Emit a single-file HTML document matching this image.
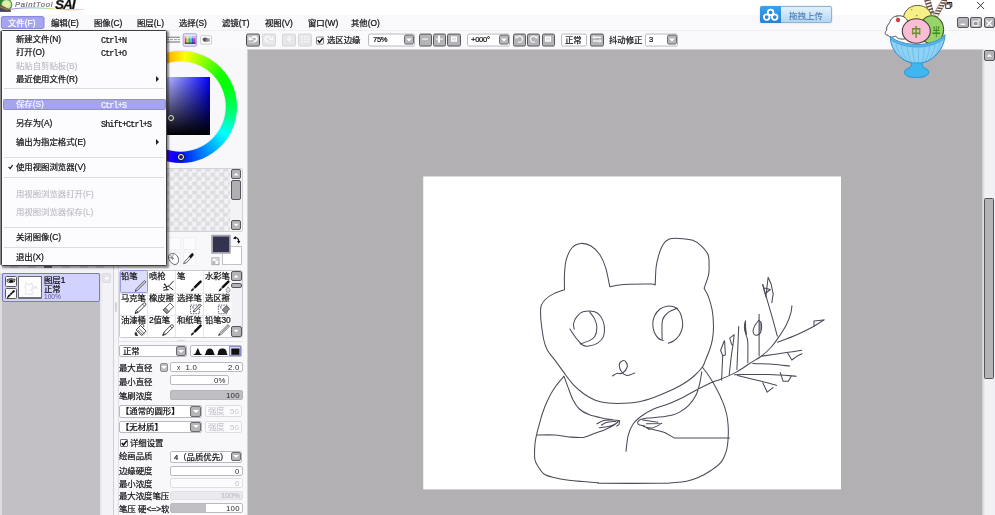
<!DOCTYPE html>
<html lang="zh">
<head>
<meta charset="utf-8">
<title>PaintTool SAI</title>
<style>
html,body{margin:0;padding:0;}
body{width:995px;height:515px;overflow:hidden;position:relative;background:#f8f8fb;
 font-family:"Liberation Sans","Noto Sans CJK SC",sans-serif;font-size:8.4px;color:#222;}
.a{position:absolute;}
.t{will-change:transform;position:absolute;white-space:nowrap;line-height:10px;font-size:8.4px;color:#101014;-webkit-text-stroke:0.22px currentColor;}
.m{font-family:"Liberation Mono","Noto Sans CJK SC",monospace;letter-spacing:-0.84px;}
.dis{color:#b9b9c2;-webkit-text-stroke:0.1px #b9b9c2;}
.n{font-family:"Liberation Sans",sans-serif;letter-spacing:0.25px;-webkit-text-stroke:0 transparent;color:#26262c;}
.box{position:absolute;box-sizing:border-box;border:1px solid #b9b9c1;border-radius:2px;background:#fff;}
.btn{position:absolute;box-sizing:border-box;border:1.6px solid #56565c;border-radius:2px;background:#b4b4b8;}
.btn.off{border-color:#d6d6da;background:#e6e6ea;}
.dd{position:absolute;box-sizing:border-box;border:1.5px solid #6a6a70;border-radius:2px;background:#b6b6ba;}
.dd:after{content:"";position:absolute;left:50%;top:50%;margin:-1.5px 0 0 -3px;border:3px solid transparent;border-top:3.5px solid #fff;border-bottom:none;}
.sep{position:absolute;left:4px;width:160px;height:1px;background:#dcdce2;}
</style>
</head>
<body>
<!-- title strip -->
<div class="a" style="left:0;top:0;width:995px;height:14.8px;background:#fff;"></div>
<!-- menubar strip -->
<div class="a" style="left:0;top:14.8px;width:995px;height:16px;background:#f9f8fb;"></div>
<div class="a" style="left:0;top:31px;width:995px;height:18px;background:#faf9fc;"></div>
<div class="a" style="left:0;top:30.4px;width:995px;height:1px;background:#efeef3;"></div>

<!-- LOGO -->
<svg class="a" style="left:0;top:0" width="90" height="14" viewBox="0 0 90 14">
<defs><linearGradient id="sw" x1="0" x2="1"><stop offset="0" stop-color="#7d4fb0"/><stop offset="0.2" stop-color="#5f7fd8"/><stop offset="0.45" stop-color="#62c48a"/><stop offset="0.62" stop-color="#e6d84a"/><stop offset="0.8" stop-color="#e8863c"/><stop offset="1" stop-color="#e24a5a" stop-opacity="0.3"/></linearGradient></defs>
<path d="M9 9.6 C 25 6.5, 45 8.3, 60 9.3 S 78 9.6, 84 9.2" fill="none" stroke="url(#sw)" stroke-width="1" opacity="0.7"/>
<rect x="0" y="0" width="3" height="9" fill="#2f7f33"/>
<ellipse cx="6.5" cy="4.6" rx="5.3" ry="5.2" fill="#cfe89a" stroke="#4d9a48" stroke-width="1.2"/>
<ellipse cx="6.6" cy="4" rx="3.2" ry="2.9" fill="#e2f0b4"/>
<path d="M0 4.6 L10.6 10 L10.9 11.7 L0 11.7 Z" fill="#3a5e3c"/>
<path d="M0 6 L9.6 10.6" stroke="#b8503c" stroke-width="1.1"/>
<path d="M0 6.8 L8 10.4" stroke="#caa070" stroke-width="0.5"/>
<path d="M0 8.6 L0 11.7 L11 11.7 L10.7 10.6 L6 10.2 Z" fill="#4e3f6e" opacity="0.9"/>
</svg>
<div class="t" style="left:14.5px;top:-0.5px;font-size:7.6px;font-style:italic;letter-spacing:0.75px;color:#707076;font-family:'Liberation Sans',sans-serif;">PaintTool</div>
<div class="t" style="left:54.6px;top:-1.7px;font-size:13.6px;line-height:14px;font-weight:bold;font-style:italic;letter-spacing:-1.1px;color:#111;font-family:'Liberation Sans',sans-serif;">SAI</div>
<!-- MENUBAR -->
<svg class="a" style="left:0;top:14px" width="50" height="17" viewBox="0 14 50 17"><rect x="1.4" y="16.6" width="42.6" height="11.8" rx="1.6" fill="#a5a5f0" stroke="#8484dc" stroke-width="1"/></svg>
<div class="t" style="left:7.6px;top:18.2px;color:#fff">文件(F)</div>
<div class="t" style="left:50.6px;top:18.2px">编辑(E)</div>
<div class="t" style="left:93.5px;top:18.2px">图像(C)</div>
<div class="t" style="left:136.5px;top:18.2px">图层(L)</div>
<div class="t" style="left:179.4px;top:18.2px">选择(S)</div>
<div class="t" style="left:222.4px;top:18.2px">滤镜(T)</div>
<div class="t" style="left:265.4px;top:18.2px">视图(V)</div>
<div class="t" style="left:308.3px;top:18.2px">窗口(W)</div>
<div class="t" style="left:351.3px;top:18.2px">其他(O)</div>

<!-- TOOLBAR -->
<div class="a" style="left:0;top:0;width:995px;height:0;transform:translateY(-0.45px);">
<div class="btn" style="left:246.1px;top:33.5px;width:14px;height:13px;border-color:#47474d;background:linear-gradient(180deg,#c2c2c6,#b0b0b4);"><svg width="14" height="13" viewBox="0 0 14 13" style="position:absolute;left:-1.6px;top:-1.6px"><path d="M5.8 5.6 C7 3.4 10.8 3.4 10.8 6.3 C10.8 8.6 8.8 9.2 7.6 8.6" fill="none" stroke="#fff" stroke-width="1.7"/><path d="M2.6 3.6 L2.6 7.8 L7.4 7.5 Z" fill="#fff"/><rect x="3" y="9.6" width="5.4" height="1" fill="#d6d6da"/></svg></div>
<div class="btn off" style="left:262.2px;top:33.5px;width:13.9px;height:13px;"><svg width="14" height="13" viewBox="0 0 14 13" style="position:absolute;left:-1.6px;top:-1.6px"><path d="M8.2 5.6 C7 3.4 3.2 3.4 3.2 6.3 C3.2 8.6 5.2 9.2 6.4 8.6" fill="none" stroke="#fafafc" stroke-width="1.7"/><path d="M11.4 3.6 L11.4 7.8 L6.6 7.5 Z" fill="#fafafc"/><rect x="5.6" y="9.6" width="5.4" height="1" fill="#f0f0f3"/></svg></div>
<div class="btn off" style="left:282.3px;top:33.5px;width:13.9px;height:13px;"><svg width="14" height="13" viewBox="0 0 14 13" style="position:absolute;left:-1.5px;top:-1.5px"><path d="M8.5 3.5 L5.5 6.5 L8.5 9.5 M6 6.5 H10.5" fill="none" stroke="#f6f6f8" stroke-width="1.3"/></svg></div>
<div class="btn off" style="left:298.3px;top:33.5px;width:13.9px;height:13px;"><svg width="14" height="13" viewBox="0 0 14 13" style="position:absolute;left:-1.5px;top:-1.5px"><path d="M3 4 H11 M3 6.5 H11 M3 9 H11" fill="none" stroke="#f6f6f8" stroke-width="1.2" stroke-dasharray="2 1"/></svg></div>
<div class="a" style="left:316.1px;top:36.5px;width:8.3px;height:8.6px;box-sizing:border-box;border:1px solid #85858c;background:#fff;border-radius:1px;"></div>
<svg class="a" style="left:316.1px;top:36.5px" width="9" height="9"><path d="M1.7 3.7 L3.5 5.8 L6.7 1.7" fill="none" stroke="#0a0a0a" stroke-width="1.5"/></svg>
<div class="t" style="left:327px;top:35.2px">选区边缘</div>
<div class="box" style="left:368px;top:33.5px;width:47px;height:13px;"></div>
<div class="t" style="left:372.5px;top:35.4px;font-size:7.6px;letter-spacing:-0.3px">75%</div>
<div class="dd" style="left:404.3px;top:35px;width:10px;height:10.2px;"></div>
<div class="btn" style="left:418.5px;top:33.5px;width:13px;height:13px;"><div style="position:absolute;left:2px;top:4.2px;width:6.8px;height:1.8px;background:#fff"></div></div>
<div class="btn" style="left:432.9px;top:33.5px;width:13px;height:13px;"><div style="position:absolute;left:2px;top:4.2px;width:6.8px;height:1.8px;background:#fff"></div><div style="position:absolute;left:4.5px;top:1.6px;width:1.8px;height:7px;background:#fff"></div></div>
<div class="btn" style="left:447.3px;top:33.5px;width:13.4px;height:13px;"><div style="position:absolute;left:2.4px;top:2.2px;width:6px;height:5.6px;background:#e4e4e8;box-sizing:border-box;border:1px solid #fff"></div></div>
<div class="box" style="left:466.5px;top:33.5px;width:43.2px;height:13px;"></div>
<div class="t" style="left:470.5px;top:35.4px;font-size:7.6px;letter-spacing:-0.3px">+000°</div>
<div class="dd" style="left:498.8px;top:35px;width:10px;height:10.2px;"></div>
<div class="btn" style="left:513px;top:33.5px;width:12.8px;height:13px;"><svg width="13" height="13" viewBox="0 0 13 13" style="position:absolute;left:-1.5px;top:-1.5px"><path d="M4 5 A3 3 0 1 1 5 9.2" fill="none" stroke="#eee" stroke-width="1.3"/><path d="M2.2 3 L2.6 6.4 L5.8 5 Z" fill="#eee"/></svg></div>
<div class="btn" style="left:527.4px;top:33.5px;width:12.8px;height:13px;"><svg width="13" height="13" viewBox="0 0 13 13" style="position:absolute;left:-1.5px;top:-1.5px"><path d="M9 5 A3 3 0 1 0 8 9.2" fill="none" stroke="#eee" stroke-width="1.3"/><path d="M10.8 3 L10.4 6.4 L7.2 5 Z" fill="#eee"/></svg></div>
<div class="btn" style="left:541.8px;top:33.5px;width:12.8px;height:13px;"><div style="position:absolute;left:2.4px;top:2.2px;width:6px;height:5.6px;background:#e4e4e8;box-sizing:border-box;border:1px solid #fff"></div></div>
<div class="box" style="left:561px;top:33.5px;width:26px;height:13px;"></div>
<div class="t" style="left:565.4px;top:35.2px">正常</div>
<div class="btn" style="left:590px;top:33.5px;width:14px;height:13px;"><svg width="14" height="13" viewBox="0 0 14 13" style="position:absolute;left:-1.5px;top:-1.5px"><path d="M3 4.6 H11 M3 8.4 H11" stroke="#f2f2f4" stroke-width="1.5"/><path d="M4.6 3 L2.6 4.6 L4.6 6.2 M9.4 6.8 L11.4 8.4 L9.4 10" fill="none" stroke="#f2f2f4" stroke-width="1"/></svg></div>
<div class="t" style="left:609px;top:35.2px">抖动修正</div>
<div class="box" style="left:645px;top:33.5px;width:33px;height:13px;"></div>
<div class="t" style="left:649px;top:35.4px;font-size:7.6px">3</div>
<div class="dd" style="left:666.6px;top:35px;width:10.2px;height:10.2px;"></div>

</div>
<!-- COLORPANEL -->
<svg class="a" style="left:160px;top:33px" width="60" height="14" viewBox="160 33 60 14"><g stroke="#8a8a90" stroke-width="1"><path d="M166 37.2 H180" stroke="#77777c"/><path d="M166 39.6 H180" stroke="#9a9a9e" stroke-dasharray="3 1"/><path d="M166 42 H180" stroke="#6a6a70"/></g><rect x="183.2" y="33.8" width="13.4" height="12.4" rx="1.6" fill="#e2e2fa" stroke="#a9a9e2" stroke-width="1.1"/><rect x="184.8" y="36" width="1.8" height="7.6" fill="#e03a3a"/><rect x="186.6" y="36" width="1.8" height="7.6" fill="#e8d83a"/><rect x="188.4" y="36" width="1.8" height="7.6" fill="#3ac43a"/><rect x="190.2" y="36" width="1.8" height="7.6" fill="#3ac4c4"/><rect x="192.0" y="36" width="1.8" height="7.6" fill="#3a5ae0"/><rect x="193.8" y="36" width="1.8" height="7.6" fill="#c43ac4"/><rect x="184.8" y="35.4" width="10.8" height="3" fill="#fff" opacity="0.55"/><rect x="184.8" y="42.6" width="10.8" height="1.2" fill="#111" opacity="0.75"/><rect x="200.6" y="35.6" width="11" height="8.6" rx="1.2" fill="#fbfbfd" stroke="#c9c9cf" stroke-width="0.9"/><ellipse cx="205.2" cy="39.6" rx="2.6" ry="2.2" fill="#55555a"/><ellipse cx="207.8" cy="40" rx="2.4" ry="1.9" fill="#8a8a90" opacity="0.8"/></svg>
<div class="a" style="left:123.7px;top:49.6px;width:113.8px;height:113.8px;border-radius:50%;background:#e9e9ee;"></div>
<div class="a" style="left:124.6px;top:50.5px;width:112px;height:112px;border-radius:50%;background:conic-gradient(from 4deg,hsl(60,100%,50%),hsl(75,100%,50%) 12deg,hsl(96,100%,50%) 30deg,hsl(114,100%,50%) 45deg,hsl(122,100%,50%) 62deg,hsl(145,100%,50%) 90deg,hsl(180,100%,50%) 118deg,hsl(210,100%,50%) 150deg,hsl(240,100%,50%) 180deg,hsl(270,100%,50%) 210deg,hsl(300,100%,50%) 240deg,hsl(330,100%,50%) 270deg,hsl(360,100%,50%) 300deg,hsl(30,100%,50%) 330deg,hsl(60,100%,50%));"></div>
<div class="a" style="left:135.8px;top:61.7px;width:89.6px;height:89.6px;border-radius:50%;background:#f8f8fb;box-shadow:0 0 0 0.8px #eeeef2;"></div>
<div class="a" style="left:151.4px;top:76.7px;width:58.8px;height:58.8px;background:linear-gradient(180deg,rgba(0,0,0,0) 0%,#000 100%),linear-gradient(90deg,#fff 0%,#0000ff 100%);"></div>
<div class="a" style="left:168.2px;top:115.4px;width:6px;height:6px;box-sizing:border-box;border-radius:50%;border:1.3px solid #e8e8e8;box-shadow:0 0 0 0.8px #333,inset 0 0 0 0.8px #333;"></div>
<div class="a" style="left:177.9px;top:153.6px;width:6.2px;height:6.2px;box-sizing:border-box;border-radius:50%;border:1.7px solid #fff;box-shadow:0 0 0 0.9px #222;background:#1a1a60;"></div>
<div class="a" style="left:119.5px;top:167.5px;width:123px;height:64px;box-sizing:border-box;border:1px solid #d2d2d8;border-radius:2px;background:#f3f3f6;"></div>
<div class="a" style="left:121px;top:169px;width:108.5px;height:61.5px;background-color:#f2f2f5;background-image:conic-gradient(#dedee2 25%,#f2f2f5 0 50%,#dedee2 0 75%,#f2f2f5 0);background-size:9px 9px;background-position:8.25px 7.65px;"></div>
<div class="btn" style="left:231px;top:169px;width:10.4px;height:10.2px;"></div><svg class="a" style="left:231px;top:169px" width="11" height="11"><path d="M2.6 6.6 L5.2 3.8 L7.8 6.6 Z" fill="#fff"/></svg>
<div class="btn" style="left:231px;top:180.4px;width:10.4px;height:20px;background:#b0b0b4"></div>
<div class="btn" style="left:231px;top:219.8px;width:10.4px;height:10.2px;"></div><svg class="a" style="left:231px;top:219.8px" width="11" height="11"><path d="M2.6 3.8 L5.2 6.6 L7.8 3.8 Z" fill="#fff"/></svg>
<div class="a" style="left:167.5px;top:236.5px;width:13px;height:13.5px;box-sizing:border-box;border:1px solid #f0f0f3;background:#fbfbfd;"></div>
<div class="a" style="left:182.5px;top:236.5px;width:13px;height:13.5px;box-sizing:border-box;border:1px solid #f0f0f3;background:#fbfbfd;"></div>
<div class="a" style="left:167.5px;top:252px;width:13px;height:13.5px;box-sizing:border-box;border:1px solid #f0f0f3;background:#fbfbfd;"></div>
<div class="a" style="left:182.5px;top:252px;width:13px;height:13.5px;box-sizing:border-box;border:1px solid #f0f0f3;background:#fbfbfd;"></div>
<svg class="a" style="left:165px;top:250px" width="32" height="18" viewBox="165 250 32 18"><path d="M168.5 256.5 C169 253.6 173 252.6 175.6 254.4 C178.2 256 179.2 259.6 178.2 262.4 C177.4 264.6 174.8 265 173 264 C170.6 262.6 169.4 260.4 168.6 258.2 Z" fill="#fdfdfd" stroke="#44444a" stroke-width="0.8"/><path d="M169 257.4 L174 258.6 M170.6 255 L172.6 259.8 M173.4 254.2 L172 258.6" stroke="#55555a" stroke-width="0.6" fill="none"/><path d="M183.6 263.6 L184.6 261.4 L189.4 256.6 L191 258.2 L186.2 263 Z" fill="#e8e8ec" stroke="#333" stroke-width="0.7"/><path d="M189.2 256.4 L191.6 253.8 C192.6 253 193.8 254.2 193.2 255.2 L190.8 258 Z" fill="#111" stroke="#111" stroke-width="0.8"/></svg>
<div class="a" style="left:222.1px;top:246px;width:19.8px;height:19.4px;box-sizing:border-box;border:1px solid #c2c2c8;background:#fff;"></div>
<svg class="a" style="left:210px;top:233px" width="22" height="22" viewBox="210 233 22 22"><rect x="211.2" y="234.8" width="19.6" height="18.9" rx="0.8" fill="#a3a3ab"/><rect x="213" y="236.6" width="16.1" height="15.4" fill="#33334f"/></svg>
<svg class="a" style="left:231px;top:234px" width="12" height="12" viewBox="231 234 12 12"><path d="M234.4 237.6 C237 237 238.8 239 238.8 241.4" fill="none" stroke="#111" stroke-width="1.2"/><path d="M233 238.6 L235.6 236 L236 239.2 Z M237 241 L240.4 241 L238.8 243.8 Z" fill="#111"/></svg>
<svg class="a" style="left:211px;top:257px" width="9" height="9" viewBox="0 0 9 9"><rect x="0.9" y="0.9" width="7" height="6.8" fill="#fff" stroke="#9a9aa0" stroke-width="0.9"/><rect x="1.4" y="4" width="3" height="3.2" fill="#b8b8be"/><rect x="4.4" y="1.4" width="3" height="2.6" fill="#d8d8dc"/></svg>

<!-- LAYERPANEL -->
<div class="a" style="left:0;top:266px;width:113px;height:249px;background:#f3f3f7;"></div>
<div class="a" style="left:0;top:272.6px;width:1.6px;height:243px;background:#dcdce0;"></div>
<div class="a" style="left:1.6px;top:272.6px;width:98.6px;height:243px;background:#c2c0c5;"></div>
<div class="a" style="left:100.2px;top:272.6px;width:12.3px;height:243px;background:linear-gradient(90deg,#e4e4ea 0,#f3f2f7 3px,#f3f2f7 100%);"></div>
<div class="a" style="left:44px;top:266.4px;width:8px;height:1.6px;background:#55555a;opacity:0.8"></div>
<div class="a" style="left:10px;top:266.4px;width:8px;height:1.6px;background:#dadade;"></div>
<div class="a" style="left:28px;top:266.4px;width:8px;height:1.6px;background:#dadade;"></div>
<div class="a" style="left:62px;top:266.4px;width:8px;height:1.6px;background:#dadade;"></div>
<div class="a" style="left:80px;top:266.4px;width:8px;height:1.6px;background:#dadade;"></div>
<div class="a" style="left:96px;top:266.4px;width:8px;height:1.6px;background:#dadade;"></div>
<div class="a" style="left:2.3px;top:273.3px;width:97.5px;height:28.5px;box-sizing:border-box;border:1.5px solid #7c78cc;border-radius:2px;background:#d2d2ff;"></div>
<div class="a" style="left:5px;top:276px;width:11.6px;height:11px;box-sizing:border-box;border:1px solid #55555c;border-radius:1.5px;background:#fafafc;"></div>
<div class="a" style="left:5px;top:288.2px;width:11.6px;height:11px;box-sizing:border-box;border:1px solid #55555c;border-radius:1.5px;background:#fafafc;"></div>
<svg class="a" style="left:5px;top:276px" width="12" height="24" viewBox="0 0 12 24"><path d="M1.8 5.4 C3.6 3.4 8 3.2 10 5.2 C8 6.8 3.8 7 1.8 5.4 Z" fill="#fff" stroke="#111" stroke-width="0.8"/><ellipse cx="6.2" cy="5.3" rx="1.9" ry="1.2" fill="#111"/><path d="M1.6 4 C4 2.4 8 2.4 10.4 3.8" stroke="#222" stroke-width="0.9" fill="none"/><path d="M3.6 20.2 L9 15" stroke="#111" stroke-width="1.8" stroke-linecap="round"/><path d="M4.6 18.2 L5.8 19.4" stroke="#fff" stroke-width="0.9"/><path d="M6.4 16.4 L7.6 17.6" stroke="#fff" stroke-width="0.6"/><circle cx="2.7" cy="21.2" r="0.8" fill="#111"/></svg>
<div class="a" style="left:18.4px;top:276px;width:23.6px;height:23.4px;box-sizing:border-box;border:1px solid #6a6a72;border-bottom:2px solid #707078;border-radius:1px;background:#fdfdfe;"></div>
<svg class="a" style="left:18.4px;top:276px" width="24" height="24" viewBox="0 0 24 24"><path d="M7.5 9 C7.5 6.5 9 6.5 9.6 8.6 L12 8.6 C12.4 6.4 14.4 6.6 14.2 9 C15 11.4 14 13.6 12.6 14.2 C15 15 15.4 17.6 14.6 18.2 L8 18.2 C6.8 17.4 7.4 15 8.6 14.4 C7 13.4 6.6 10.6 7.5 9 Z M14 14 L19 10.2 M16 12.4 L16 10 M17.4 11.4 L19.6 12.4" fill="none" stroke="#c6c6d2" stroke-width="0.5"/></svg>
<div class="t" style="left:44px;top:275px;line-height:10px;">图层1</div>
<div class="t" style="left:44px;top:283.9px;line-height:10px;">正常</div>
<div class="t" style="left:44.4px;top:292.6px;font-size:6.6px;line-height:8px;color:#54548c;letter-spacing:0px;-webkit-text-stroke:0 transparent;">100%</div>
<div class="a" style="left:101.6px;top:273.4px;width:9.6px;height:9.6px;box-sizing:border-box;border:1px solid #dcdce2;border-radius:1.5px;background:#e6e6ea;"></div><svg class="a" style="left:101.6px;top:273.4px" width="10" height="10"><path d="M2.4 6.2 L4.8 3.6 L7.2 6.2 Z" fill="#fff"/></svg>
<div class="a" style="left:112.6px;top:266px;width:1px;height:249px;background:#d0d0d6;"></div>
<div class="a" style="left:113.6px;top:266px;width:5px;height:249px;background:#f6f6fa;"></div>
<div class="a" style="left:118.4px;top:266px;width:0.8px;height:249px;background:#dedee4;"></div>
<div class="a" style="left:114.8px;top:301.6px;width:1.8px;height:10.4px;background:#d2d2d8;border-radius:1px;"></div>

<!-- TOOLPANEL -->
<div class="a" style="left:119.2px;top:269.8px;width:123.6px;height:68.2px;box-sizing:border-box;border:1px solid #c9c9d1;border-radius:2.5px;background:#f3f3f7;"></div>
<div class="a" style="left:120.2px;top:270.8px;width:110.4px;height:66.2px;background:#fff;"></div>
<div class="a" style="left:147.1px;top:270.8px;width:0.9px;height:66.2px;background:#e6e6ec;"></div>
<div class="a" style="left:175.2px;top:270.8px;width:0.9px;height:66.2px;background:#e6e6ec;"></div>
<div class="a" style="left:203.0px;top:270.8px;width:0.9px;height:66.2px;background:#e6e6ec;"></div>
<div class="a" style="left:120.2px;top:292.5px;width:110.4px;height:0.9px;background:#e6e6ec;"></div>
<div class="a" style="left:120.2px;top:314.5px;width:110.4px;height:0.9px;background:#e6e6ec;"></div>
<div class="a" style="left:119.6px;top:270.4px;width:28.2px;height:22.8px;box-sizing:border-box;border:1.2px solid #9a9adc;border-radius:1.5px;background:#dcdcfb;"></div>
<div class="t" style="left:121.3px;top:271.0px;letter-spacing:-0.15px">铅笔</div>
<div class="t" style="left:148.9px;top:271.0px;letter-spacing:-0.15px">喷枪</div>
<div class="t" style="left:177.0px;top:271.0px;letter-spacing:-0.15px">笔</div>
<div class="t" style="left:204.8px;top:271.0px;letter-spacing:-0.15px">水彩笔</div>
<div class="t" style="left:121.3px;top:293.1px;letter-spacing:-0.15px">马克笔</div>
<div class="t" style="left:148.9px;top:293.1px;letter-spacing:-0.15px">橡皮擦</div>
<div class="t" style="left:177.0px;top:293.1px;letter-spacing:-0.15px">选择笔</div>
<div class="t" style="left:204.8px;top:293.1px;letter-spacing:-0.15px">选区擦</div>
<div class="t" style="left:121.3px;top:315.1px;letter-spacing:-0.15px">油漆桶</div>
<div class="t" style="left:148.9px;top:315.1px;letter-spacing:-0.15px">2值笔</div>
<div class="t" style="left:177.0px;top:315.1px;letter-spacing:-0.15px">和纸笔</div>
<div class="t" style="left:204.8px;top:315.1px;letter-spacing:-0.15px">铅笔30</div>
<svg class="a" style="left:0;top:0;pointer-events:none" width="250" height="345" viewBox="0 0 250 345"><g transform="translate(134.1 279.4)"><path d="M1 12 L2 9.4 L10.4 1 L12 2.6 L3.6 11 Z" fill="#e8e8ec" stroke="#44444a" stroke-width="0.7"/><path d="M2.8 10.2 L11.2 1.8" stroke="#55555a" stroke-width="0.6"/><path d="M1 12 L1.8 10.4 L2.6 11.2 Z" fill="#111"/></g><g transform="translate(161.7 279.4)"><path d="M1.4 8.6 L7.4 6.4 L12 1.4 M6.6 6.8 L11.6 10.6 M4.4 6.2 L5.4 10.8 M1.6 10.8 L7 10.2 M3 5 L4.4 6.6" fill="none" stroke="#222" stroke-width="1"/><circle cx="3" cy="5" r="0.9" fill="#222"/></g><g transform="translate(189.8 279.4)"><path d="M0.8 12.2 L2 9.6 L3.6 11 Z" fill="#111"/><path d="M2.6 10.4 L3.8 9.2" stroke="#111" stroke-width="1.6"/><path d="M5.2 7.8 L10.8 2.2" stroke="#111" stroke-width="2.5" stroke-linecap="round"/><path d="M3.9 9.1 L4.8 8.2" stroke="#666" stroke-width="1.4"/></g><g transform="translate(217.6 279.4)"><path d="M0.8 12.2 L2 9.6 L3.6 11 Z" fill="#111"/><path d="M2.6 10.4 L3.8 9.2" stroke="#111" stroke-width="1.6"/><path d="M5.2 7.8 L10.8 2.2" stroke="#111" stroke-width="2.5" stroke-linecap="round"/><path d="M3.9 9.1 L4.8 8.2" stroke="#666" stroke-width="1.4"/><path d="M10.4 7.4 C11.6 9.2 12.4 10 12.4 11 A2 2 0 0 1 8.4 11 C8.4 10 9.2 9.2 10.4 7.4 Z" fill="#e4e4ea" stroke="#66666c" stroke-width="0.6"/></g><g transform="translate(134.1 301.5)"><path d="M1 12 L2.2 8.8 L9.6 1.4 C10.6 0.6 12.4 2.4 11.6 3.4 L4.2 10.8 Z" fill="#fff" stroke="#222" stroke-width="0.85"/><path d="M2.2 8.8 L4.2 10.8 M8.4 2.6 L10.4 4.6" stroke="#222" stroke-width="0.7"/><path d="M1 12 L1.7 10.2 L2.8 11.3 Z" fill="#111"/></g><g transform="translate(161.7 301.5)"><path d="M1.6 8.4 L8.4 1.6 L12 5.2 L5.2 12 Z" fill="#fff" stroke="#333" stroke-width="0.8"/><path d="M3.6 6.4 L7.2 10 L5.2 12 L1.6 8.4 Z" fill="#9a9aa2" stroke="#333" stroke-width="0.7"/></g><g transform="translate(189.8 301.5)"><rect x="0.8" y="3.6" width="8.8" height="8.6" fill="none" stroke="#333" stroke-width="0.8" stroke-dasharray="1.4 1.1"/><path d="M3.4 10.4 L4.2 8.4 L10 2.4 L11.6 4 L5.6 9.8 Z" fill="#ddd" stroke="#222" stroke-width="0.7"/><path d="M2.2 5 L4 6.6 M3.2 4.6 L3.2 7" stroke="#4a4a8a" stroke-width="0.6"/></g><g transform="translate(217.6 301.5)"><rect x="0.8" y="3.6" width="8.8" height="8.6" fill="none" stroke="#333" stroke-width="0.8" stroke-dasharray="1.4 1.1"/><path d="M4.6 8.4 L8.8 4.2 L12 7.4 L7.8 11.6 Z" fill="#8c8c94" stroke="#333" stroke-width="0.7"/><path d="M2.2 5 L4 6.6 M3.2 4.6 L3.2 7" stroke="#4a4a8a" stroke-width="0.6"/></g><g transform="translate(134.1 323.5)"><path d="M2 6.4 L6.4 2 L12 7.6 L7.6 12 Z" fill="#fff" stroke="#222" stroke-width="0.85"/><path d="M5 5 L10.4 10.4 M3.6 6.4 L9 11.8" stroke="#333" stroke-width="0.7"/><path d="M6.6 1.8 C8 -0.4 10.6 1 9.4 3.6" fill="none" stroke="#222" stroke-width="0.8"/><path d="M0.6 9.4 C0.4 10.8 0.6 12.4 2.4 12.6 L4 12.6 L2 8 Z" fill="#333"/></g><g transform="translate(161.7 323.5)"><path d="M1 12 L2.2 8.8 L9.6 1.4 C10.6 0.6 12.4 2.4 11.6 3.4 L4.2 10.8 Z" fill="#fff" stroke="#222" stroke-width="0.85"/><path d="M2.2 8.8 L4.2 10.8 M8.4 2.6 L10.4 4.6" stroke="#222" stroke-width="0.7"/><path d="M1 12 L1.7 10.2 L2.8 11.3 Z" fill="#111"/></g><g transform="translate(189.8 323.5)"><path d="M0.8 12.2 L2 9.6 L3.6 11 Z" fill="#111"/><path d="M2.6 10.4 L3.8 9.2" stroke="#111" stroke-width="1.6"/><path d="M5.2 7.8 L10.8 2.2" stroke="#111" stroke-width="2.5" stroke-linecap="round"/><path d="M3.9 9.1 L4.8 8.2" stroke="#666" stroke-width="1.4"/></g><g transform="translate(217.6 323.5)"><path d="M1 12 L2 9.4 L10.4 1 L12 2.6 L3.6 11 Z" fill="#e8e8ec" stroke="#44444a" stroke-width="0.7"/><path d="M2.8 10.2 L11.2 1.8" stroke="#55555a" stroke-width="0.6"/><path d="M1 12 L1.8 10.4 L2.6 11.2 Z" fill="#111"/></g></svg>
<div class="btn" style="left:231.2px;top:271px;width:10.5px;height:10.3px;"></div><svg class="a" style="left:231.3px;top:271px" width="11" height="11"><path d="M2.5 6.6 L5.1 3.8 L7.7 6.6 Z" fill="#fff"/></svg>
<div class="btn" style="left:231.2px;top:283px;width:10.5px;height:5.4px;"></div>
<div class="btn" style="left:231.2px;top:326.4px;width:10.5px;height:10.3px;"></div><svg class="a" style="left:231.3px;top:326.4px" width="11" height="11"><path d="M2.5 3.8 L5.1 6.6 L7.7 3.8 Z" fill="#fff"/></svg>
<div class="a" style="left:176.5px;top:340.4px;width:8.6px;height:1.6px;background:#dadae0;border-radius:1px;"></div>
<div class="a" style="left:119px;top:341px;width:124px;height:0.9px;background:#e4e4ea;"></div>
<div class="box" style="left:119px;top:344.7px;width:68.2px;height:12.7px;"></div>
<div class="t" style="left:123px;top:346.2px">正常</div>
<div class="dd" style="left:176px;top:346.2px;width:10px;height:9.8px;"></div>
<div class="box" style="left:190.3px;top:344.7px;width:52.1px;height:12.7px;"></div>
<div class="a" style="left:229.3px;top:345.6px;width:12px;height:10.9px;box-sizing:border-box;border:1.2px solid #8a8ad0;background:#d6d6f8;"></div>
<svg class="a" style="left:190px;top:345px" width="53" height="12" viewBox="190 345 53 12"><path d="M193 354.9 L195.4 353.6 L197.4 348.4 L198.2 348.4 L200.2 353.6 L202.6 354.9 Z" fill="#111"/><path d="M204.6 354.9 L205.6 353.4 C206.2 350 207.6 348.4 209.8 348.4 C212 348.4 213.4 350 214 353.4 L215 354.9 Z" fill="#111"/><path d="M217.2 354.9 L218 353.2 C218.2 350 219.2 348.4 222.4 348.4 C225.6 348.4 226.6 350 226.8 353.2 L227.6 354.9 Z" fill="#111"/><rect x="231.3" y="348.5" width="8.2" height="6.3" fill="#111"/></svg>
<div class="t" style="left:119px;top:362.9px;">最大直径</div>
<div class="dd" style="left:160px;top:362.8px;width:7.6px;height:9.2px;border-width:1.2px;border-color:#8a8a90;background:#c0c0c4"></div>
<div class="box" style="left:170px;top:362px;width:72.6px;height:10.2px;"></div>
<div class="t n" style="left:176.6px;top:363.1px;font-size:7.8px;"><span style="font-size:6.6px">x</span>&nbsp; 1.0</div>
<div class="t n" style="right:755.6px;top:363.1px;font-size:7.8px;">2.0</div>
<div class="t" style="left:119px;top:376.6px;">最小直径</div>
<div class="box" style="left:170px;top:374.6px;width:59.4px;height:10px;"></div>
<div class="t n" style="right:769px;top:375.7px;font-size:7.8px;">0%</div>
<div class="t" style="left:119px;top:390.6px;">笔刷浓度</div>
<div class="box" style="left:170px;top:390px;width:72.6px;height:10.2px;background:#bfbfc4;border-color:#b2b2b8"></div>
<div class="t n" style="right:755.6px;top:391.1px;font-size:7.8px;">100</div>
<div class="box" style="left:119px;top:405px;width:83.4px;height:12.6px;"></div>
<div class="t" style="left:121px;top:406.4px">【通常的圆形】</div>
<div class="dd" style="left:190.4px;top:406.2px;width:10.8px;height:10.4px;"></div>
<div class="box" style="left:205.4px;top:405.2px;width:37px;height:12px;border-color:#dcdce2;background:#fbfbfd"></div>
<div class="t dis" style="left:207.6px;top:406.4px;color:#c4c4cc">强度</div>
<div class="t dis n" style="right:755.8px;top:407.3px;font-size:7.8px;color:#c4c4cc">50</div>
<div class="box" style="left:119px;top:420.6px;width:83.4px;height:12.6px;"></div>
<div class="t" style="left:121px;top:422.0px">【无材质】</div>
<div class="dd" style="left:190.4px;top:421.8px;width:10.8px;height:10.4px;"></div>
<div class="box" style="left:205.4px;top:420.8px;width:37px;height:12px;border-color:#dcdce2;background:#fbfbfd"></div>
<div class="t dis" style="left:207.6px;top:422.0px;color:#c4c4cc">强度</div>
<div class="t dis n" style="right:755.8px;top:422.9px;font-size:7.8px;color:#c4c4cc">50</div>
<div class="a" style="left:119.6px;top:438.6px;width:8.4px;height:8.6px;box-sizing:border-box;border:1px solid #707078;background:#fff;border-radius:1px;"></div>
<svg class="a" style="left:119.6px;top:438.6px" width="9" height="9"><path d="M1.7 3.9 L3.5 6 L6.8 1.8" fill="none" stroke="#0a0a0a" stroke-width="1.5"/></svg>
<div class="t" style="left:130.4px;top:438px">详细设置</div>
<div class="t" style="left:119px;top:451.4px;">绘画品质</div>
<div class="box" style="left:170.4px;top:450.5px;width:72px;height:12.2px;"></div>
<div class="t" style="left:174px;top:451.6px"><span style="font-size:7.6px">4</span>（品质优先）</div>
<div class="dd" style="left:231px;top:451.7px;width:10.2px;height:9.8px;"></div>
<div class="t" style="left:119px;top:466px;">边缘硬度</div>
<div class="box" style="left:170px;top:465.8px;width:72.6px;height:9.8px;"></div>
<div class="t n" style="right:755.6px;top:466.7px;font-size:7.8px;">0</div>
<div class="t" style="left:119px;top:479px;">最小浓度</div>
<div class="box" style="left:170px;top:478.2px;width:72.6px;height:9.8px;border-color:#dedee4;background:#fbfbfd"></div>
<div class="t n" style="right:755.6px;top:479.1px;font-size:7.8px;color:#c0c0c8">0</div>
<div class="t" style="left:119px;top:491.4px;">最大浓度笔压</div>
<div class="box" style="left:170px;top:490.6px;width:72.6px;height:9.8px;border-color:#e0e0e6;background:#ebebef"></div>
<div class="t" style="right:755.6px;top:490.8px;font-size:7.4px;color:#c0c0c8">100%</div>
<div class="t" style="left:119px;top:504.2px;">笔压 硬&lt;=&gt;软</div>
<div class="box" style="left:170px;top:503.2px;width:72.6px;height:10px;"></div>
<div class="a" style="left:171px;top:504.2px;width:35px;height:8px;background:#bfbfc4;"></div>
<div class="t n" style="right:755.6px;top:504.3px;font-size:7.8px;">100</div>

<!-- CANVAS -->
<div class="a" style="left:246.5px;top:48.5px;width:749px;height:467px;background:#d2d2d6;"></div>
<div class="a" style="left:248.3px;top:50px;width:734.2px;height:465px;background:#b2b0b3;"></div>
<div class="a" style="left:982.5px;top:49px;width:12.5px;height:466px;background:linear-gradient(90deg,#d8d8dc 0,#f1f0f5 2px,#f1f0f5 100%);"></div>
<div class="btn" style="left:984px;top:50px;width:10.5px;height:10.5px;"></div>
<svg class="a" style="left:984px;top:50px" width="11" height="11"><path d="M2.7 6.8 L5.3 4 L7.9 6.8 Z" fill="#fff"/></svg>
<div class="a" style="left:984px;top:198px;width:10.2px;height:181px;box-sizing:border-box;border:1.2px solid #55555a;border-radius:1.5px;background:#b3b2b6;"></div>
<svg class="a" style="left:0;top:0" width="995" height="515" viewBox="0 0 995 515"><rect x="423.25" y="176.45" width="417.75" height="312.95" fill="#fff"/></svg>
<!-- DRAWING-START -->
<svg class="a" style="left:0;top:0" width="995" height="515" viewBox="0 0 995 515" fill="none" stroke="#4a4a58" stroke-width="1.05" stroke-linecap="round" stroke-linejoin="round">
<path d="M759.2 321L761.2 323L761.3 330L759.3 334Z" fill="#9a9ab4" stroke="none"/>
<path d="M564.5 289.7C562.7 290.4 557.1 292.0 553.9 293.6C550.7 295.2 547.3 297.4 545.2 299.5C543.1 301.6 541.9 303.6 541.1 306.0C540.3 308.4 540.6 311.3 540.6 314.0C540.6 316.7 540.6 317.8 541.1 322.0C541.6 326.2 542.7 334.8 543.7 339.5C544.7 344.2 545.2 346.3 547.3 350.0C549.3 353.7 553.0 357.5 556.0 361.6C559.0 365.7 562.6 370.8 565.5 374.7C568.4 378.6 570.5 381.7 573.5 384.9C576.5 388.1 580.1 391.1 583.7 393.7C587.3 396.2 591.2 398.6 595.3 400.2C599.4 401.8 603.5 402.6 608.4 403.1C613.3 403.6 619.5 403.5 624.6 403.3C629.7 403.1 634.2 402.8 639.1 401.8C644.0 400.8 648.9 399.2 653.7 397.5C658.6 395.8 663.8 393.6 668.2 391.6C672.6 389.6 676.8 387.4 680.0 385.7C683.2 384.0 684.9 383.0 687.3 381.3C689.7 379.6 692.0 377.9 694.6 375.5C697.2 373.1 700.8 369.3 702.6 366.7C704.4 364.1 704.3 362.9 705.5 360.0C706.7 357.1 708.7 352.5 709.9 349.0C711.1 345.5 711.9 342.8 712.5 338.9C713.1 335.0 713.6 330.7 713.5 325.8C713.4 320.9 713.0 314.6 712.1 309.7C711.2 304.8 709.7 300.2 708.4 296.6C707.1 293.0 704.8 289.7 704.1 288.3 M704.1 288.3C704.8 286.1 707.7 278.9 708.5 275.2C709.3 271.4 709.2 269.2 709.1 265.8C709.0 262.4 709.4 258.1 708.1 254.8C706.8 251.5 704.0 248.5 701.5 246.1C699.0 243.7 696.7 241.6 692.8 240.3C688.9 239.0 682.2 238.6 678.2 238.4C674.2 238.2 671.3 238.2 668.8 239.3C666.2 240.4 664.6 242.0 662.9 244.7C661.2 247.4 659.7 251.8 658.6 255.6C657.5 259.4 656.7 262.3 656.1 267.2C655.5 272.1 655.4 282.0 655.2 285.0 M655.2 285.0C654.6 284.9 655.5 284.2 651.3 284.1C647.1 284.0 635.7 284.1 630.0 284.3C624.3 284.5 620.7 284.9 617.3 285.3C613.9 285.7 611.0 286.6 609.8 286.8 M609.8 286.8C609.1 283.6 607.4 273.2 605.7 267.8C604.1 262.4 602.3 258.3 599.9 254.7C597.5 251.1 594.2 247.9 591.1 246.0C588.0 244.1 584.1 243.2 581.0 243.4C577.9 243.7 574.6 244.9 572.2 247.5C569.8 250.1 567.7 254.7 566.4 259.1C565.1 263.5 564.8 268.6 564.5 273.7C564.2 278.8 564.5 287.0 564.5 289.7 M574.3 329.3C574.2 328.3 573.1 325.7 573.6 323.5C574.1 321.3 575.6 318.1 577.2 316.2C578.8 314.2 580.1 312.5 583.0 311.8C585.9 311.1 591.8 311.1 594.7 311.8C597.6 312.5 598.9 314.0 600.5 316.2C602.1 318.4 603.6 321.5 604.1 324.9C604.6 328.3 604.5 333.6 603.4 336.6C602.3 339.6 600.0 341.5 597.6 343.1C595.2 344.7 591.3 345.6 588.9 346.0C586.5 346.4 585.0 346.4 583.0 345.3C581.0 344.2 579.4 342.2 577.2 339.5C575.0 336.8 571.1 330.8 569.9 329.0 M589.6 311.8C590.5 313.0 593.5 316.4 594.7 319.1C595.9 321.8 596.9 324.9 596.9 327.8C596.9 330.7 596.0 334.4 594.7 336.6C593.4 338.8 591.3 339.7 588.9 340.9C586.5 342.1 581.6 343.4 580.1 343.9 M677.1 308.3C675.8 308.9 671.5 310.0 669.1 311.9C666.7 313.8 663.8 315.4 662.6 319.9C661.4 324.4 662.2 335.7 662.1 338.9 M677.8 309.0C677.0 308.6 674.8 307.1 673.0 306.6C671.2 306.1 669.2 305.8 667.0 306.2C664.8 306.6 662.1 307.4 660.0 309.0C657.9 310.6 655.7 313.5 654.5 316.0C653.3 318.5 652.8 321.3 652.8 324.0C652.8 326.7 653.2 329.6 654.2 332.0C655.2 334.4 657.0 337.1 658.5 338.5C660.0 339.9 662.5 340.1 663.3 340.4 M676.0 307.6C676.7 308.4 679.0 310.4 680.0 312.5C681.0 314.6 681.8 317.4 682.2 319.9C682.6 322.3 683.0 324.6 682.5 327.2C682.0 329.8 680.8 332.9 679.3 335.2C677.8 337.5 675.3 339.7 673.5 341.0C671.7 342.3 669.2 342.8 668.4 343.2 M612.5 375.9C613.3 375.5 615.5 373.7 617.1 373.3C618.7 372.9 620.6 374.3 622.2 373.3C623.9 372.3 626.4 369.4 627.0 367.5C627.6 365.6 626.7 363.0 625.9 361.9C625.1 360.8 623.3 360.4 622.2 360.9C621.1 361.3 619.4 362.8 619.3 364.6C619.2 366.4 620.2 370.0 621.5 371.8C622.8 373.6 625.1 375.3 627.3 375.5C629.5 375.7 633.4 373.4 634.6 373.0 M564.0 376.2C562.4 378.1 557.4 383.7 554.6 387.8C551.8 391.9 549.4 396.5 547.3 400.9C545.2 405.3 543.6 409.8 542.2 414.0C540.8 418.2 539.8 422.4 538.8 426.0C537.8 429.6 537.0 432.4 536.4 435.5C535.8 438.6 535.1 440.9 534.9 444.9C534.6 448.9 534.2 455.7 534.9 459.5C535.5 463.3 537.3 465.1 538.8 467.5C540.3 469.9 541.6 472.4 543.9 474.0C546.2 475.6 548.6 476.2 552.7 477.2C556.8 478.2 563.6 479.5 568.7 480.2C573.8 480.9 578.4 481.2 583.2 481.6C588.1 482.0 594.5 482.5 597.8 482.8C601.1 483.1 593.1 483.2 603.0 483.3C612.9 483.4 645.5 483.4 657.0 483.3C668.5 483.2 667.1 483.1 672.0 482.7C676.9 482.3 682.2 482.0 686.6 481.2C691.0 480.4 694.1 479.4 698.2 477.6C702.3 475.8 707.4 473.0 711.3 470.3C715.2 467.6 719.0 465.0 721.5 461.6C724.0 458.2 725.5 453.8 726.6 449.9C727.7 446.0 727.9 442.4 728.1 438.3C728.4 434.2 728.4 429.2 728.1 425.2C727.9 421.1 727.5 417.8 726.6 414.0C725.7 410.2 724.6 406.6 722.9 402.4C721.2 398.2 718.7 393.0 716.4 388.6C714.1 384.2 711.4 379.7 709.1 376.2C706.8 372.7 703.7 368.9 702.6 367.5 M564.0 376.2C564.6 377.9 566.2 382.5 567.7 386.4C569.2 390.3 570.9 395.7 572.8 399.5C574.7 403.3 576.5 406.4 579.3 409.0C582.1 411.6 585.4 413.2 589.5 414.8C593.6 416.4 600.0 417.5 604.0 418.4C608.0 419.2 611.2 419.5 613.8 419.9C616.4 420.2 618.6 420.4 619.6 420.5 M536.4 435.0C539.4 435.0 548.7 434.7 554.1 435.0C559.5 435.3 563.9 436.5 568.7 436.9C573.6 437.3 578.8 438.0 583.2 437.4C587.6 436.8 591.0 434.7 594.9 433.3C598.8 431.9 603.4 430.2 606.5 428.9C609.6 427.6 611.8 426.5 613.8 425.3C615.8 424.1 617.5 422.2 618.2 421.6 M597.0 423.8C598.1 423.2 601.1 421.1 603.6 420.5C606.1 419.9 610.8 420.0 612.3 419.9 M601.4 425.3C602.2 424.8 604.1 423.0 606.5 422.4C608.9 421.8 614.4 421.6 616.0 421.4 M599.2 427.8C600.9 427.6 606.6 427.0 609.4 426.3C612.2 425.6 614.5 424.3 616.0 423.4C617.5 422.5 617.8 421.3 618.2 420.9 M619.6 420.5C619.5 421.2 619.4 423.7 618.9 424.6C618.4 425.5 617.1 425.8 616.7 426.0 M626.0 451.3C626.4 448.6 627.0 439.9 628.2 435.3C629.4 430.7 631.0 427.0 633.3 423.7C635.6 420.4 638.6 418.1 642.0 415.7C645.4 413.3 649.3 411.1 653.7 409.1C658.1 407.2 663.4 405.9 668.2 404.0C673.1 402.1 677.9 399.9 682.8 397.5C687.6 395.1 692.7 391.9 697.3 389.5C701.9 387.1 706.4 384.8 710.4 383.0C714.4 381.2 717.0 380.7 721.3 378.9C725.6 377.1 731.5 374.7 736.3 372.1C741.1 369.5 745.7 366.0 749.9 363.3C754.1 360.6 758.2 358.6 761.6 356.0C765.0 353.4 767.7 350.9 770.4 348.0C773.1 345.1 775.0 342.5 777.7 338.6C780.4 334.7 784.2 328.9 786.4 324.7C788.6 320.4 789.9 316.2 790.8 313.1C791.7 310.0 791.7 307.0 791.9 305.8 M701.8 371.8C701.4 373.8 700.7 379.6 699.7 383.5C698.7 387.4 697.8 391.5 696.0 395.1C694.2 398.7 691.4 402.5 688.7 405.3C686.0 408.1 682.7 410.3 680.0 411.9C677.3 413.5 676.0 414.0 672.6 414.9C669.2 415.8 663.6 416.6 659.5 417.1C655.4 417.6 650.9 417.7 647.8 418.1C644.6 418.5 642.3 418.9 640.6 419.6C638.9 420.3 638.0 421.3 637.7 422.2C637.5 423.1 637.9 424.2 639.1 424.8C640.3 425.4 643.9 425.7 644.9 425.9 M642.8 420.0 L658.0 422.2 M646.4 423.7 L661.7 423.4 M661.7 423.4C660.1 424.2 655.2 427.5 652.2 428.0C649.2 428.5 645.0 426.8 643.5 426.6 M644.9 426.6 L649.3 429.5 M747.8 362.6C747.8 359.2 748.1 347.0 747.8 342.2C747.5 337.4 746.4 336.5 745.8 334.0C745.2 331.5 744.4 329.3 744.4 327.2C744.4 325.1 745.3 322.1 745.5 321.1 M758.7 320.4C758.0 321.3 755.5 324.0 754.6 325.9C753.7 327.8 753.0 330.0 753.1 331.5C753.2 333.0 754.0 334.5 755.0 334.9C756.0 335.3 758.4 334.8 759.4 334.0C760.4 333.2 761.0 331.8 761.3 330.0C761.6 328.2 761.6 324.6 761.2 323.0C760.8 321.4 759.1 320.8 758.7 320.4 M777.3 336.1C776.4 332.7 773.6 322.1 771.8 315.8C770.0 309.5 768.2 303.5 766.7 298.3C765.2 293.1 763.4 286.8 762.7 284.5 M777.7 342.2C781.1 340.9 792.0 336.9 798.0 334.2C804.0 331.5 809.6 328.6 814.0 326.2C818.4 323.8 822.5 320.8 824.2 319.7 M761.6 356.2C765.7 355.6 779.7 353.6 786.4 352.6C793.1 351.6 799.2 350.6 801.7 350.2 M752.8 363.6C756.2 363.7 766.9 363.8 773.0 364.2C779.1 364.6 786.8 365.8 789.6 366.1 M734.5 374.7C740.2 374.7 758.4 374.2 768.7 374.5C779.0 374.8 791.7 375.9 796.3 376.2 M737.4 375.5C741.4 376.5 754.8 379.7 761.4 381.3C768.0 382.9 774.2 384.7 776.7 385.4"/>
<path d="M649.3 428.8L659.5 430.9L664.7 432.5L674.2 437.9L729.5 437.9 M721.6 380.2L722.7 355.8 M724.3 340.8L720.6 350.3L722.7 355.8L725.4 355.1L724.6 341.0 M729.2 374.8L731.5 354.4L732.9 345.6 M734.2 334.7L729.7 338.1L731.5 344.2L732.9 345.6L734.2 334.7 M736.9 369.4L738.7 326.6 M745.5 321.1L744.6 326.0L745.3 331.5L746.5 334.5L745.6 328.0L745.5 321.1 M759.1 355.8L759.1 314.3 M762.7 284.5L765.9 296.8L766.7 289.6L768.1 277.2L771.0 283.7L773.2 293.9L771.8 302.7 M764.5 288.0L770.3 289.5L766.5 292.5 M814.0 326.2L814.0 321.1L823.5 320.1 M787.7 353.1L791.8 360.0L796.8 356.3L801.9 353.7 M780.3 372.6L783.2 381.3L788.3 381.3L791.2 376.2 M762.8 382.8L767.2 392.2L773.0 387.6"/>
</svg>
<!-- DRAWING-END -->
<!-- DROPDOWN -->
<div class="a" style="left:0;top:31px;width:1.2px;height:234px;background:#8a8a90;"></div>
<div class="a" style="left:1px;top:30px;width:166.2px;height:235.6px;box-sizing:border-box;background:#fcfcfe;border:1.5px solid #3e3e44;border-radius:1.5px;box-shadow:1.5px 1.5px 2px rgba(0,0,0,0.45);"></div>
<div class="a" style="left:3px;top:98.5px;width:162.5px;height:11.5px;box-sizing:border-box;background:#a5a5ee;border:1px solid #8f8fe2;border-radius:1.5px;"></div>
<div class="sep" style="top:88.4px"></div>
<div class="sep" style="top:156.8px"></div>
<div class="sep" style="top:177.0px"></div>
<div class="sep" style="top:227.3px"></div>
<div class="sep" style="top:246.8px"></div>
<div class="t" style="left:16.4px;top:34.0px">新建文件(N)</div>
<div class="t m" style="left:101px;top:35.5px">Ctrl+N</div>
<div class="t" style="left:16.4px;top:47.3px">打开(O)</div>
<div class="t m" style="left:101px;top:48.8px">Ctrl+O</div>
<div class="t dis" style="left:16.4px;top:60.7px">粘贴自剪贴板(B)</div>
<div class="t" style="left:16.4px;top:73.8px">最近使用文件(R)</div>
<div class="a" style="left:155.5px;top:76.3px;border:3px solid transparent;border-left:3.6px solid #1a1a1a;border-right:none;margin-top:-0.4px;"></div>
<div class="t" style="left:16.4px;top:99.2px;color:#f4f4ff">保存(S)</div>
<div class="t m" style="left:101px;top:100.7px;color:#f4f4ff">Ctrl+S</div>
<div class="t" style="left:16.4px;top:118.0px">另存为(A)</div>
<div class="t m" style="left:101px;top:119.5px">Shift+Ctrl+S</div>
<div class="t" style="left:16.4px;top:136.7px">输出为指定格式(E)</div>
<div class="a" style="left:155.5px;top:139.2px;border:3px solid transparent;border-left:3.6px solid #1a1a1a;border-right:none;margin-top:-0.4px;"></div>
<div class="t" style="left:16.4px;top:162.2px">使用视图浏览器(V)</div>
<div class="t dis" style="left:16.4px;top:188.6px">用视图浏览器打开(F)</div>
<div class="t dis" style="left:16.4px;top:207.2px">用视图浏览器保存(L)</div>
<div class="t" style="left:16.4px;top:232.4px">关闭图像(C)</div>
<div class="t" style="left:16.4px;top:251.6px">退出(X)</div>
<svg class="a" style="left:8px;top:163px" width="8" height="8"><path d="M0.6 3.8 L2.2 5.6 L4.6 2.2" fill="none" stroke="#1a1a1a" stroke-width="1.2"/></svg>

<!-- TOPRIGHT -->
<div class="a" style="left:760px;top:5.6px;width:71.6px;height:17.4px;box-sizing:border-box;border:1px solid #8fb4cf;border-radius:2px;background:linear-gradient(180deg,#e0f0fc 0%,#cfe6f9 45%,#b2d6f3 100%);box-shadow:0 0 1.5px rgba(120,150,180,0.5);"></div>
<div class="a" style="left:760px;top:5.6px;width:20.6px;height:17.4px;border-radius:2px 0 0 2px;background:linear-gradient(180deg,#3da2ea 0%,#2d90e0 50%,#2483d6 100%);"></div>
<svg class="a" style="left:760px;top:5.6px" width="21" height="18" viewBox="760 5.6 21 18"><g fill="none" stroke="#fff" stroke-width="1.8"><circle cx="770.6" cy="12" r="2.8"/><circle cx="766.7" cy="16.7" r="2.8"/><circle cx="774.7" cy="16.7" r="2.8"/></g><path d="M768 15 L769.4 13.6 M772.2 13.8 L773.4 15" stroke="#fff" stroke-width="2" fill="none"/><circle cx="770.6" cy="12" r="1.3" fill="#2a86d6"/><circle cx="766.7" cy="16.7" r="1.3" fill="#2a86d6"/></svg>
<div class="t" style="left:789.4px;top:10.5px;font-size:8.5px;color:#4a7cae;-webkit-text-stroke:0.1px #4a7cae;">拖拽上传</div>
<svg class="a" style="left:940px;top:0" width="50" height="12" viewBox="940 0 50 12"><path d="M945.7 4 H950.2 V8.4 H945.7 Z" fill="#fff" stroke="#1a1a1a" stroke-width="0.9"/><path d="M947.2 4 V2.5 H951.8 V6.9 H950.2" fill="none" stroke="#1a1a1a" stroke-width="0.9"/><path d="M947.2 2.7 H951.8" stroke="#1a1a1a" stroke-width="1.3"/><path d="M977.1 2 L984.1 9 M984.1 2 L977.1 9" stroke="#1a1a1a" stroke-width="0.85"/></svg>
<div class="btn" style="left:957.3px;top:17.1px;width:11.4px;height:11.2px;border-width:1.7px;border-color:#55555b;background:linear-gradient(180deg,#b8b8bc,#aeaeb2)"></div>
<div class="btn" style="left:970.3px;top:17.1px;width:11.5px;height:11.2px;border-width:1.7px;border-color:#55555b;background:linear-gradient(180deg,#b8b8bc,#aeaeb2)"></div>
<div class="btn" style="left:983.5px;top:17.1px;width:11.5px;height:11.2px;border-width:1.7px;border-color:#55555b;background:linear-gradient(180deg,#b8b8bc,#aeaeb2)"></div>
<svg class="a" style="left:957px;top:17px" width="38" height="12" viewBox="957 17 38 12"><rect x="960.6" y="23.6" width="4.7" height="1.4" fill="#fff"/><rect x="973.1" y="21.3" width="5" height="4.4" fill="#9a9a9e" stroke="#fff" stroke-width="1"/><rect x="978.2" y="19.3" width="1.5" height="1.3" fill="#fff"/><path d="M986.5 20.6 L991.8 26 M991.8 20.6 L986.5 26" stroke="#fff" stroke-width="1.4"/></svg>
<svg class="a" style="left:880px;top:0" width="70" height="80" viewBox="880 0 70 80"><g><path d="M924.2 -1 L929.6 -1 L933.4 13 L929 14.4 Z" fill="#fff" stroke="#6a5248" stroke-width="0.6"/><path d="M924.6 0.5 L930.2 -1.3 L930.6 0.3 L925.0 2.1 Z" fill="#6a4a40"/><path d="M925.5 3.5 L931.1 1.7 L931.5 3.3 L925.9 5.1 Z" fill="#6a4a40"/><path d="M926.3 6.5 L931.9 4.7 L932.3 6.3 L926.7 8.1 Z" fill="#6a4a40"/><path d="M927.1 9.5 L932.8 7.7 L933.1 9.3 L927.5 11.1 Z" fill="#6a4a40"/><path d="M928.0 12.5 L933.6 10.7 L934.0 12.3 L928.4 14.1 Z" fill="#6a4a40"/><path d="M942.4 -1 L946.8 1.2 L937.4 16.9 L933.2 14.4 Z" fill="#fff" stroke="#6a5248" stroke-width="0.6"/><path d="M942.6 -0.6 L947.4 0.0 L946.6 1.4 L941.8 0.8 Z" fill="#6a4a40"/><path d="M941.1 2.0 L945.9 2.6 L945.1 4.0 L940.3 3.4 Z" fill="#6a4a40"/><path d="M939.5 4.7 L944.3 5.3 L943.5 6.7 L938.7 6.1 Z" fill="#6a4a40"/><path d="M938.0 7.3 L942.8 7.9 L942.0 9.3 L937.2 8.7 Z" fill="#6a4a40"/><path d="M936.5 9.9 L941.3 10.5 L940.5 11.9 L935.7 11.3 Z" fill="#6a4a40"/><path d="M934.9 12.6 L939.7 13.2 L938.9 14.6 L934.1 14.0 Z" fill="#6a4a40"/></g><path d="M903.2 22 C902.4 12 909 5.4 917.6 5.4 C926 5.4 931.6 11 931.6 18 L931 24 L904 25 Z" fill="#f7ef88" stroke="#5e5c30" stroke-width="1"/><circle cx="911.6" cy="9.6" r="0.7" fill="#7a9a2a"/><circle cx="916.8" cy="15.6" r="0.8" fill="#7a9a2a"/><ellipse cx="931.6" cy="29.8" rx="12" ry="14" fill="#98d468" stroke="#3e5e26" stroke-width="1.1"/><path d="M897 16 C903 14.6 909 19 908.4 25 L906 38.6 C901 40 897 38.4 895.6 36 C892 38 888.6 37 888 35.2 C884.8 35.4 884.4 32 886.6 30.4 C886 26 888.6 24.4 889.6 22.6 C890.6 18.4 894 16.4 897 16 Z" fill="#fefefe" stroke="#4a4a4e" stroke-width="1"/><circle cx="898" cy="20" r="1.9" fill="#e23232" stroke="#a01c1c" stroke-width="0.4"/><path d="M897.2 17.8 L896.6 15.4" stroke="#7a5a3a" stroke-width="0.5"/><ellipse cx="916.3" cy="31" rx="14" ry="12.3" fill="#f9bdd6" stroke="#4e3a3e" stroke-width="1.1"/><path d="M890.4 36.6 C896 41.6 906 44.6 917.4 44.6 C929 44.6 940 41 944.8 34.8 C945 44 939 56 927 61.4 L922.4 62.8 C921.6 66 922.6 67.6 925.4 68.6 C930.4 70.4 929.6 75 924 76.6 C919 78 912 77.8 908 76.2 C903 74.2 903.6 70.2 908 68.6 C911 67.4 912 65.6 911.2 62.8 L906 61 C896 56 890 46 890.4 36.6 Z" fill="#8ed2f5" stroke="#3088c6" stroke-width="1"/><path d="M911.2 62.8 C912 65.6 911 67.4 908 68.6 C903.6 70.2 903 74.2 908 76.2 C912 77.8 919 78 924 76.6 C929.6 75 930.4 70.4 925.4 68.6 C922.6 67.6 921.6 66 922.4 62.8 Z" fill="#3fb6f0" stroke="#2f96d8" stroke-width="0.8"/><path d="M890.4 36.6 C896 41.6 906 44.6 917.4 44.6 C929 44.6 940 41 944.8 34.8 L944.6 37.8 C939 43.6 929 47 917.4 47 C906 47 896.4 44 890.8 39.4 Z" fill="#5fb8ea" stroke="#3a96d4" stroke-width="0.7"/><g stroke="#62b4e4" stroke-width="0.7" fill="none"><path d="M896 44 C897 50 900 55 904.6 59.6"/><path d="M901.4 46 C902 52 904.4 57 908 61"/><path d="M907 47 C907.4 52 909 58 911.4 62"/><path d="M912.6 47.4 C912.6 53 913.6 58 915 62.4"/><path d="M918.4 47.4 C918.6 53 918.6 58 918.4 62.4"/><path d="M924 47 C924.4 52 923.4 58 921.8 62.2"/><path d="M929.6 46 C929.6 51 927.6 57 925 61.4"/><path d="M935 44.4 C934.6 50 932 55.6 928.6 60"/><path d="M940 42 C939.6 47 937 53 933 57.6"/></g></svg>
<div class="t" style="left:911.1px;top:25.6px;font-size:12.2px;line-height:14px;transform:scaleX(0.84);transform-origin:0 0;font-weight:bold;color:#6b8e2e;-webkit-text-stroke:0 transparent;font-family:'Liberation Sans','Noto Sans CJK SC',sans-serif;">中</div>
<div class="t" style="left:931.9px;top:25.1px;font-size:11.6px;line-height:14px;transform:scaleX(0.74);transform-origin:0 0;font-weight:bold;color:#3f8a1e;-webkit-text-stroke:0 transparent;font-family:'Liberation Sans','Noto Sans CJK SC',sans-serif;">半</div>

</body>
</html>
